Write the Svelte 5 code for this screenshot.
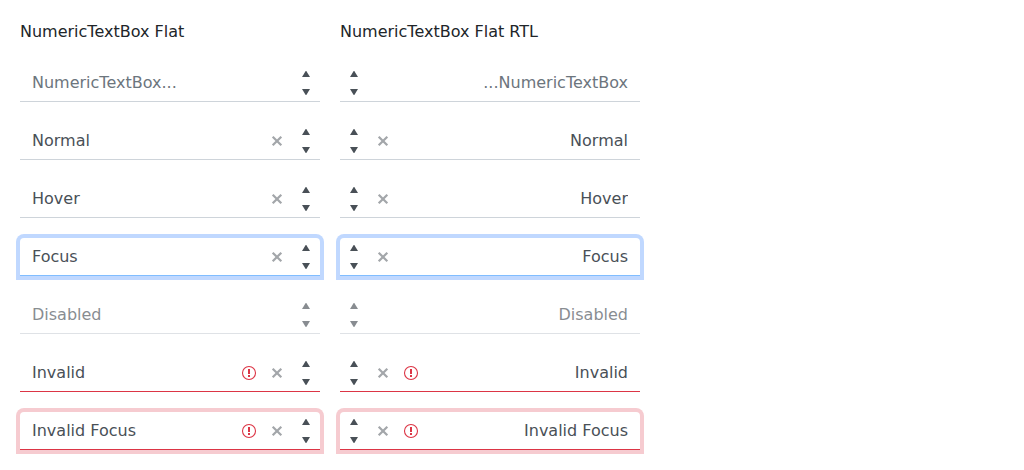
<script>
  const columns = [
    { title: 'NumericTextBox Flat', dir: 'ltr' },
    { title: 'NumericTextBox Flat RTL', dir: 'rtl' }
  ];

  const fields = [
    { name: 'Empty', value: '', state: '' },
    { name: 'Normal', value: 'Normal', state: '', clear: true },
    { name: 'Hover', value: 'Hover', state: 'hover', clear: true },
    { name: 'Focus', value: 'Focus', state: 'focus', clear: true },
    { name: 'Disabled', value: 'Disabled', state: 'disabled', disabled: true },
    { name: 'Invalid', value: 'Invalid', state: 'invalid', clear: true, invalid: true },
    { name: 'Invalid Focus', value: 'Invalid Focus', state: 'invalid focus', clear: true, invalid: true }
  ];
</script>

<main>
  {#each columns as column}
    <section>
      <h2>{column.title}</h2>
      {#each fields as field}
        <div class="numeric {field.state}" dir={column.dir}>
          <input
            type="text"
            placeholder="NumericTextBox..."
            value={field.value}
            disabled={field.disabled}
            aria-label={field.name}
            aria-invalid={field.invalid}
          />
          {#if field.invalid}
            <span class="validation">
              <svg viewBox="0 0 16 16" width="16" height="16" aria-hidden="true">
                <circle cx="8" cy="8" r="6.5" fill="none" stroke="currentColor" stroke-width="1.1" />
                <path d="M7 4h2v5H7zM7 10h2v2H7z" fill="currentColor" />
              </svg>
            </span>
          {/if}
          {#if field.clear}
            <button class="clear" type="button" aria-label="Clear">
              <svg viewBox="0 0 16 16" width="16" height="16" aria-hidden="true">
                <path d="M3.7 3.7l8.6 8.6M12.3 3.7l-8.6 8.6" fill="none" stroke="currentColor" stroke-width="2.2" />
              </svg>
            </button>
          {/if}
          <span class="spinner">
            <button type="button" disabled={field.disabled} aria-label="Increase">
              <svg viewBox="0 0 16 16" width="16" height="16" aria-hidden="true">
                <path d="M4 12l3.7-6h.6l3.7 6z" fill="currentColor" />
              </svg>
            </button>
            <button type="button" disabled={field.disabled} aria-label="Decrease">
              <svg viewBox="0 0 16 16" width="16" height="16" aria-hidden="true">
                <path d="M4 5l3.7 6h.6l3.7-6z" fill="currentColor" />
              </svg>
            </button>
          </span>
        </div>
      {/each}
    </section>
  {/each}
</main>

<style>
  :global(body) {
    background: #fff;
    color: #212529;
    font: 16px/24px "DejaVu Sans", sans-serif;
  }

  main {
    display: grid;
    grid-template-columns: repeat(2, minmax(0, 300px));
    gap: 20px;
    padding: 20px;
  }

  section {
    display: flex;
    flex-direction: column;
    gap: 20px;
  }

  h2 {
    margin: 0;
    font: inherit;
  }

  .numeric {
    display: flex;
    align-items: stretch;
    color: #495057;
    border-bottom: 1px solid #ced4da;
    border-radius: 4px 4px 0 0;
  }

  input {
    flex: 1;
    min-width: 0;
    box-sizing: border-box;
    height: 37px;
    margin: 0;
    padding: 6px 12px;
    border: 0;
    outline: 0;
    background: transparent;
    color: inherit;
    font: inherit;
  }

  input::placeholder {
    color: #6c757d;
    opacity: 1;
  }

  button {
    display: flex;
    align-items: center;
    justify-content: center;
    margin: 0;
    padding: 0;
    border: 0;
    background: transparent;
    color: inherit;
  }

  svg {
    display: block;
    flex: none;
  }

  .validation {
    display: flex;
    align-items: center;
    justify-content: center;
    width: 26px;
    color: #dc3545;
  }

  .clear {
    width: 30px;
    opacity: 0.5;
  }

  .spinner {
    display: flex;
    flex-direction: column;
    width: 28px;
  }

  .spinner button {
    flex: 1;
  }

  .focus {
    border-color: #80bdff;
    box-shadow: 0 0 0 4px #c0d8ff;
  }

  .invalid {
    border-color: #dc3545;
  }

  .invalid.focus {
    box-shadow: 0 0 0 4px #f6cbd0;
  }

  .disabled {
    opacity: 0.65;
  }
</style>
